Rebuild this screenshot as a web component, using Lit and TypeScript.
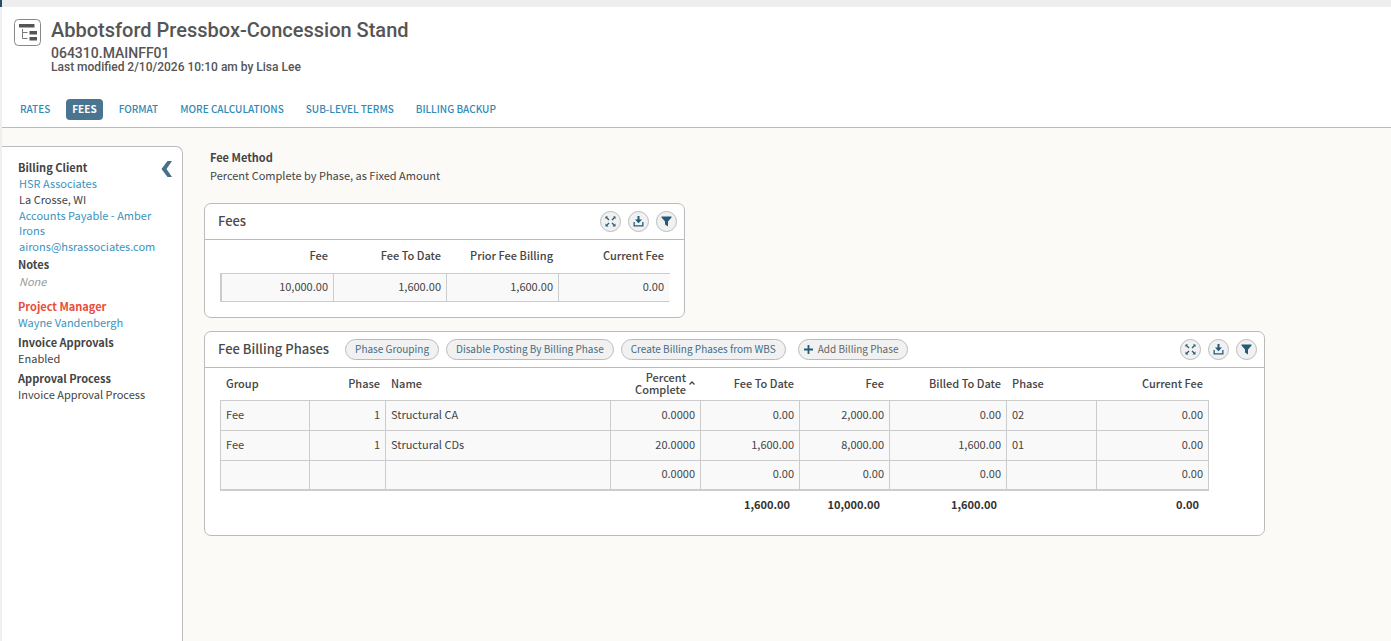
import { LitElement, html, css, svg, nothing } from "lit";
import { customElement, property } from "lit/decorators.js";
import { classMap } from "lit/directives/class-map.js";

const expandIcon = svg`<svg viewBox="0 0 11 11" width="11" height="11" aria-hidden="true">
  <path fill="currentColor" d="M0.500 0.500h2.500L0.500 3zM10.500 0.500v2.500L8 0.500zM0.500 10.500v-3L3.500 10.500zM10.500 10.500h-3L10.500 7.500z"/>
  <path stroke="currentColor" stroke-width="1.300" d="M1 1l3 3M10 1L7 4M1.500 9.500L4 7M9.500 9.500L7 7"/></svg>`;
const downloadIcon = svg`<svg viewBox="0 0 11 11" width="11" height="11" aria-hidden="true">
  <path fill="currentColor" d="M4.500 0h2v3.500H9L5.500 7.200 2 3.500h2.500zM0.500 6h1.300v3.200h7.400V6h1.300v4.600H0.500z"/></svg>`;
const filterIcon = svg`<svg viewBox="0 0 11 11" width="11" height="11" aria-hidden="true">
  <path fill="currentColor" d="M0.500 0.500h10v1L7 5.500V10.500L4 8.500v-3L0.500 1.500z"/></svg>`;

interface Column {
  label: string;
  width: number;
  numeric?: boolean;
  sorted?: boolean;
}

const feeColumns: Column[] = [
  { label: "Fee", width: 114, numeric: true },
  { label: "Fee To Date", width: 113, numeric: true },
  { label: "Prior Fee Billing", width: 112, numeric: true },
  { label: "Current Fee", width: 111, numeric: true },
];
const feeRows = [["10,000.00", "1,600.00", "1,600.00", "0.00"]];

const phaseColumns: Column[] = [
  { label: "Group", width: 90 },
  { label: "Phase", width: 76, numeric: true },
  { label: "Name", width: 225 },
  { label: "Percent Complete", width: 90, numeric: true, sorted: true },
  { label: "Fee To Date", width: 99, numeric: true },
  { label: "Fee", width: 90, numeric: true },
  { label: "Billed To Date", width: 117, numeric: true },
  { label: "Phase", width: 90 },
  { label: "Current Fee", width: 112, numeric: true },
];
const phaseRows = [
  ["Fee", "1", "Structural CA", "0.0000", "0.00", "2,000.00", "0.00", "02", "0.00"],
  ["Fee", "1", "Structural CDs", "20.0000", "1,600.00", "8,000.00", "1,600.00", "01", "0.00"],
  ["", "", "", "0.0000", "0.00", "0.00", "0.00", "", "0.00"],
];
const phaseTotals = ["", "", "", "", "1,600.00", "10,000.00", "1,600.00", "", "0.00"];

@customElement("data-grid")
class DataGrid extends LitElement {
  @property({ attribute: false }) columns: Column[] = [];
  @property({ attribute: false }) rows: string[][] = [];
  @property({ attribute: false }) totals: string[] = [];
  @property({ reflect: true }) variant = "closed";

  static styles = css`
    :host { display: block; }
    table { border-collapse: separate; border-spacing: 0; table-layout: fixed; width: 0; }
    th, td { box-sizing: border-box; text-align: left; overflow: hidden; white-space: nowrap; }
    th { height: 33px; padding: 0 6px 2px 5px; border-bottom: 1px solid #ccc; font-weight: 500; line-height: 12px; color: #444; }
    th:first-child { padding-left: 6px; }
    .sort { display: flex; align-items: center; justify-content: flex-end; gap: 3px; white-space: normal; }
    .sort-label { width: min-content; }
    td { height: 30px; padding: 0 5px 4px; line-height: 16px; }
    tbody td { background: #f9f9f9; border-right: 1px solid #ccc; border-bottom: 1px solid #ccc; }
    tbody td:first-child { border-left: 1px solid #ccc; }
    .numeric { text-align: right; }
    tfoot td { padding-right: 10px; font-weight: 700; color: #333; }
    :host([variant="closed"]) tbody tr:last-child td { border-bottom-width: 2px; }
    :host([variant="open"]) th { height: 34px; padding-bottom: 4px; }
    :host([variant="open"]) td { height: 28px; }
    :host([variant="open"]) tbody td:first-child { border-left-width: 2px; }
    :host([variant="open"]) tbody td:last-child { border-right-color: transparent; background-clip: padding-box; }
  `;

  render() {
    const { columns, rows, totals } = this;
    return html`<table>
      <colgroup>${columns.map((c) => html`<col style="width:${c.width}px">`)}</colgroup>
      <thead><tr>${columns.map((c) => html`<th scope="col" class=${classMap({ numeric: !!c.numeric })}>
        ${c.sorted
          ? html`<span class="sort"><span class="sort-label">${c.label}</span><svg viewBox="0 0 6 4" width="6" height="4" aria-hidden="true"><path d="M0.500 3.500L3 1l2.500 2.500" fill="none" stroke="#444" stroke-width="1.300"/></svg></span>`
          : c.label}</th>`)}</tr></thead>
      <tbody>${rows.map((r) => html`<tr>${r.map((v, i) => html`<td class=${classMap({ numeric: !!columns[i].numeric })}>${v}</td>`)}</tr>`)}</tbody>
      ${totals.length
        ? html`<tfoot><tr>${totals.map((v, i) => html`<td class=${classMap({ numeric: !!columns[i].numeric })}>${v}</td>`)}</tr></tfoot>`
        : nothing}
    </table>`;
  }
}

@customElement("grid-card")
class GridCard extends LitElement {
  @property() heading = "";

  static styles = css`
    :host { display: block; width: fit-content; background: #fff; border: 1px solid #bbb; border-radius: 7px; }
    .bar { display: flex; align-items: center; height: 35px; padding: 0 7px 0 13px; border-bottom: 1px solid #bbb; }
    h2 { margin: 0 16px 0 0; padding-bottom: 2px; font-size: 13px; line-height: 20px; font-weight: 500; color: #4a4a4a; white-space: nowrap; }
    .tools { display: flex; gap: 7px; margin-left: auto; }
    .tool { display: grid; place-items: center; width: 21px; height: 21px; padding: 0; border: 1px solid #bbb; border-radius: 50%; background: #f1f1f1; color: #265a78; }
  `;

  render() {
    return html`
      <div class="bar">
        <h2>${this.heading}</h2>
        <slot name="actions"></slot>
        <div class="tools">
          <button class="tool" aria-label="Expand">${expandIcon}</button>
          <button class="tool" aria-label="Download">${downloadIcon}</button>
          <button class="tool" aria-label="Filter">${filterIcon}</button>
        </div>
      </div>
      <slot></slot>`;
  }
}

@customElement("app-root")
class AppRoot extends LitElement {
  static styles = css`
    :host { display: flex; flex-direction: column; box-sizing: border-box; min-height: 100vh; border-left: 2px solid #efefef; background: #fbfaf6; color: #444; font: 11px/16px "Noto Sans CJK SC", "Noto Sans", sans-serif; }
    a { color: #3c93bd; text-decoration: none; }
    .strip { height: 7px; margin-left: -2px; border-left: 2px solid #234f6b; background: #eee; box-sizing: border-box; }
    header { background: #fff; border-bottom: 1px solid #bbb; }
    .project { display: flex; gap: 10px; padding: 12px 12px 0; font-family: Roboto, sans-serif; font-weight: 500; color: #555; }
    .project-icon { flex: none; width: 27px; height: 27px; }
    .titles { display: flex; flex-direction: column; }
    h1 { margin: 0; font-size: 20px; line-height: 22px; font-weight: 500; }
    .number { margin: 5px 0 0; font-size: 14px; line-height: 14px; }
    .modified { margin: 0; font-size: 12px; line-height: 14px; }
    nav { display: flex; gap: 10px; padding: 25px 12px 7px; }
    .tab { height: 21px; padding: 0 6px; border-radius: 4px; font-size: 10px; line-height: 20px; font-weight: 500; white-space: nowrap; color: #2f8ab6; }
    .tab.active { background: #4a7590; color: #fff; font-weight: 700; }
    .body { display: flex; flex: 1; align-items: stretch; }
    aside { flex: none; box-sizing: border-box; width: 181px; margin-top: 18px; padding: 11px 16px; display: grid; grid-template-columns: 1fr auto; align-content: start; background: #fff; border: 1px solid #bbb; border-width: 1px 1px 0 0; border-radius: 0 7px 0 0; }
    .details { min-width: 0; width: 137px; }
    .details p { margin-bottom: 1px; line-height: 15px; }
    .collapse { width: 12px; height: 20px; margin-right: -7px; padding: 0; border: 0; background: none; color: #456f8b; align-self: start; }
    h3 { margin: 0; font-size: 11px; line-height: 18px; font-weight: 700; }
    .label { margin-top: 3px; }
    .alert { margin-top: 8px; color: #e74c3c; }
    p { margin: 0; }
    .none { padding-top: 1px; color: #999; font-style: italic; }
    .client { padding-left: 1px; }
    main { flex: 1; min-width: 0; padding: 19px 21px; }
    .method { padding: 0 6px; }
    .method h3 { line-height: 20px; }
    .method p { line-height: 16px; }
    .cards { display: grid; gap: 13px; margin-top: 20px; justify-items: start; }
    .fees { padding: 0 14px 15px 15px; }
    .phases { padding: 0 55px 14px 15px; }
    .actions { display: flex; gap: 7px; }
    .pill { display: flex; align-items: center; gap: 5px; box-sizing: border-box; height: 21px; padding: 0 9px 1px; border: 1px solid #bbb; border-radius: 11px; background: #f1f1f1; color: #446d82; font: inherit; font-size: 10px; white-space: nowrap; }
    .add { margin-left: 5px; padding-left: 5px; color: #666; }
  `;

  render() {
    const tabs = ["RATES", "FEES", "FORMAT", "MORE CALCULATIONS", "SUB-LEVEL TERMS", "BILLING BACKUP"];
    return html`
      <div class="strip"></div>
      <header>
        <div class="project">
          <svg class="project-icon" viewBox="0 0 27 27" aria-hidden="true">
            <rect x="0.500" y="0.500" width="26" height="26" rx="4" fill="#fff" stroke="#888"/>
            <path d="M5 5h15.500v3.500H5zM15.500 12H23v3.500h-7.500zM15.500 18H23v3.500h-7.500z" fill="#555"/>
            <path d="M8.500 10v9.500h5M8.500 13.500h5" fill="none" stroke="#777"/>
          </svg>
          <div class="titles">
            <h1>Abbotsford Pressbox-Concession Stand</h1>
            <p class="number">064310.MAINFF01</p>
            <p class="modified">Last modified 2/10/2026 10:10 am by Lisa Lee</p>
          </div>
        </div>
        <nav>${tabs.map((t) => html`<a href="#" class=${classMap({ tab: true, active: t === "FEES" })}>${t}</a>`)}</nav>
      </header>
      <div class="body">
        <aside>
          <div class="details">
            <h3>Billing Client</h3>
            <div class="client">
              <p><a href="#">HSR Associates</a></p>
              <p>La Crosse, WI</p>
              <p><a href="#">Accounts Payable - Amber Irons</a></p>
              <p><a href="#">airons@hsrassociates.com</a></p>
            </div>
            <h3>Notes</h3>
            <p class="none client">None</p>
            <h3 class="alert">Project Manager</h3>
            <p><a href="#">Wayne Vandenbergh</a></p>
            <h3 class="label">Invoice Approvals</h3>
            <p>Enabled</p>
            <h3 class="label">Approval Process</h3>
            <p>Invoice Approval Process</p>
          </div>
          <button class="collapse" aria-label="Collapse panel">
            <svg viewBox="0 0 12 20" width="12" height="20" aria-hidden="true"><path d="M6.500 3h4.500L5.500 11l5.500 8H6.500L0.500 11z" fill="currentColor"/></svg>
          </button>
        </aside>
        <main>
          <div class="method">
            <h3>Fee Method</h3>
            <p>Percent Complete by Phase, as Fixed Amount</p>
          </div>
          <div class="cards">
            <grid-card heading="Fees">
              <data-grid class="fees" variant="open" .columns=${feeColumns} .rows=${feeRows}></data-grid>
            </grid-card>
            <grid-card heading="Fee Billing Phases">
              <div slot="actions" class="actions">
                <button class="pill">Phase Grouping</button>
                <button class="pill">Disable Posting By Billing Phase</button>
                <button class="pill">Create Billing Phases from WBS</button>
                <button class="pill add"><svg viewBox="0 0 9 9" width="9" height="9" aria-hidden="true"><path d="M4.500 0v9M0 4.500h9" stroke="#265a78" stroke-width="1.800"/></svg>Add Billing Phase</button>
              </div>
              <data-grid class="phases" .columns=${phaseColumns} .rows=${phaseRows} .totals=${phaseTotals}></data-grid>
            </grid-card>
          </div>
        </main>
      </div>`;
  }
}
